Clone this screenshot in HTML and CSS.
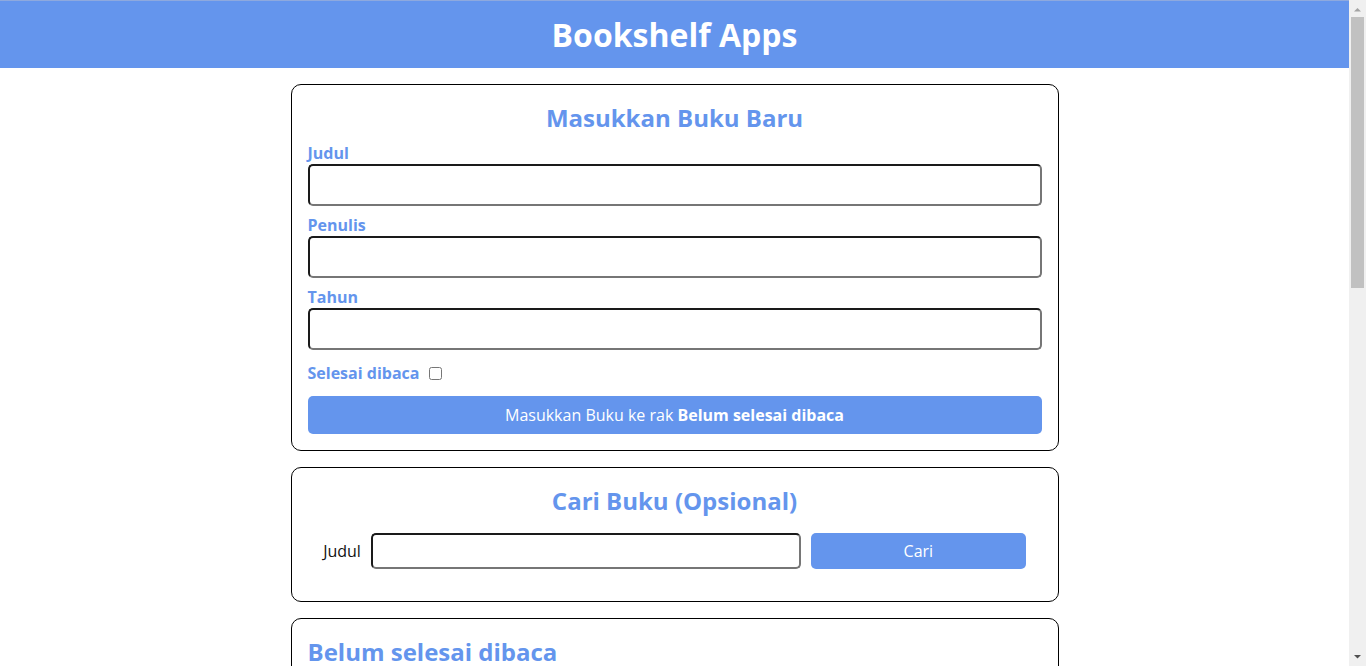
FILE: index.html
```html
<!DOCTYPE html>
<html lang="id">
<head>
  <meta charset="UTF-8" />
  <title>Bookshelf Apps</title>
  <link rel="stylesheet" href="styles.css">
</head>
<body>
  <header class="head-bar">
    <h1>Bookshelf Apps</h1>
  </header>
  <main>
    <section class="input_section">
      <h2>Masukkan Buku Baru</h2>
      <form id="inputBook">
        <div class="input">
          <label for="inputBookTitle">Judul</label>
          <input id="inputBookTitle" type="text" required>
        </div>
        <div class="input">
          <label for="inputBookAuthor">Penulis</label>
          <input id="inputBookAuthor" type="text" required>
        </div>
        <div class="input">
          <label for="inputBookYear">Tahun</label>
          <input id="inputBookYear" type="number" required>
        </div>
        <div class="input_inline">
          <label for="inputBookIsComplete">Selesai dibaca</label>
          <input id="inputBookIsComplete" type="checkbox">
        </div>
        <button id="bookSubmit" type="submit">Masukkan Buku ke rak <span>Belum selesai dibaca</span></button>
      </form>
    </section>

    <section class="search_section">
      <h2>Cari Buku (Opsional)</h2>
      <form id="searchBook">
        <label for="searchBookTitle">Judul</label>
        <input id="searchBookTitle" type="text">
        <button id="searchSubmit" type="submit">Cari</button>
      </form>
    </section>

    <section class="book_shelf">
      <h2>Belum selesai dibaca</h2>
      <div id="incompleteBookshelfList" class="book_list">
        <article class="book_item">
          <h3>Laskar Pelangi</h3>
          <p>Penulis: Andrea Hirata</p>
          <p>Tahun: 2005</p>
          <div class="action">
            <button class="green">Selesai dibaca</button>
            <button class="red">Hapus buku</button>
          </div>
        </article>
        <article class="book_item">
          <h3>Bumi Manusia</h3>
          <p>Penulis: Pramoedya Ananta Toer</p>
          <p>Tahun: 1980</p>
          <div class="action">
            <button class="green">Selesai dibaca</button>
            <button class="red">Hapus buku</button>
          </div>
        </article>
      </div>
    </section>

    <section class="book_shelf">
      <h2>Selesai dibaca</h2>
      <div id="completeBookshelfList" class="book_list">
        <article class="book_item">
          <h3>Negeri 5 Menara</h3>
          <p>Penulis: Ahmad Fuadi</p>
          <p>Tahun: 2009</p>
          <div class="action">
            <button class="green">Belum selesai di Baca</button>
            <button class="red">Hapus buku</button>
          </div>
        </article>
      </div>
    </section>
  </main>

  <!-- window scrollbar -->
  <div class="fake-scrollbar">
    <svg class="arrow" width="17" height="17" viewBox="0 0 17 17"><path d="M5 11.5 L8.5 8 L12 11.5 Z" fill="#a3a3a3"/></svg>
    <div class="track"><div class="thumb"></div></div>
    <svg class="arrow" width="17" height="17" viewBox="0 0 17 17"><path d="M5 6 L8.5 9.5 L12 6 Z" fill="#505050"/></svg>
  </div>
</body>
</html>
```

FILE: styles.css
```css
* {
  box-sizing: border-box;
}

body {
  margin: 0 17px 0 0;
  padding: 0;
  font-family: 'Open Sans', 'Liberation Sans', sans-serif;
  color: #222;
}

.head-bar {
  background-color: cornflowerblue;
  border-top: 1px solid #8ea9de;
  color: white;
  height: 68px;
  display: flex;
  align-items: center;
  justify-content: center;
}

.head-bar h1 {
  margin: 0;
  font-size: 32px;
  font-weight: 700;
}

main {
  width: 768px;
  margin: 16px auto;
}

section {
  border: 1px solid black;
  border-radius: 10px;
  padding: 16px;
  margin-bottom: 16px;
}

section h2 {
  margin: 0;
  font-size: 24px;
  line-height: 33px;
  color: cornflowerblue;
  text-align: center;
}

.input_section h2 {
  margin-bottom: 8px;
}

.input label,
.input_inline label {
  display: block;
  color: cornflowerblue;
  font-weight: 700;
  font-size: 16px;
  line-height: 22px;
}

.input input {
  display: block;
  width: 100%;
  height: 42px;
  margin-bottom: 8px;
  padding: 5px;
  font-size: 16px;
  border-radius: 5px;
  border: 2px solid;
  border-color: #1a1a1a #767676 #767676 #1a1a1a;
}

.input_inline {
  display: flex;
  align-items: center;
  margin: 12px 0;
  height: 22px;
}

.input_inline input {
  margin: 0 0 0 10px;
  width: 13px;
  height: 13px;
}

#bookSubmit {
  width: 100%;
  height: 38px;
  background-color: cornflowerblue;
  color: white;
  border: none;
  border-radius: 5px;
  font-family: inherit;
  font-size: 16px;
  cursor: pointer;
}

#bookSubmit span {
  font-weight: 700;
}

#searchBook {
  display: flex;
  justify-content: center;
  align-items: center;
  gap: 10px;
  margin: 16px 0;
}

#searchBook label {
  font-size: 16px;
  color: #111;
}

#searchBookTitle {
  width: 430px;
  height: 36px;
  padding: 5px;
  font-size: 16px;
  border-radius: 5px;
  border: 2px solid;
  border-color: #1a1a1a #767676 #767676 #1a1a1a;
}

#searchSubmit {
  width: 215px;
  height: 36px;
  background-color: cornflowerblue;
  color: white;
  border: none;
  border-radius: 5px;
  font-family: inherit;
  font-size: 16px;
  cursor: pointer;
}

.book_shelf h2 {
  text-align: left;
}

.book_list {
  margin-top: 16px;
}

.book_item {
  border: 1px solid #222;
  border-radius: 5px;
  padding: 8px 16px 16px;
  margin-bottom: 16px;
}

.book_item h3 {
  margin: 8px 0;
  font-size: 18px;
}

.book_item p {
  margin: 6px 0;
}

.action button {
  border: none;
  border-radius: 5px;
  padding: 5px 10px;
  margin-right: 6px;
  color: white;
  font-family: inherit;
  font-size: 14px;
  cursor: pointer;
}

.action .green {
  background-color: darkgreen;
}

.action .red {
  background-color: darkred;
}

.fake-scrollbar {
  position: fixed;
  top: 0;
  right: 0;
  width: 17px;
  height: 100vh;
  background-color: #f0f0f0;
  display: flex;
  flex-direction: column;
}

.fake-scrollbar .arrow {
  flex: none;
  display: block;
}

.fake-scrollbar .track {
  flex: 1;
  padding: 0 2px;
}

.fake-scrollbar .thumb {
  height: 271px;
  background-color: #c1c1c1;
}
```
